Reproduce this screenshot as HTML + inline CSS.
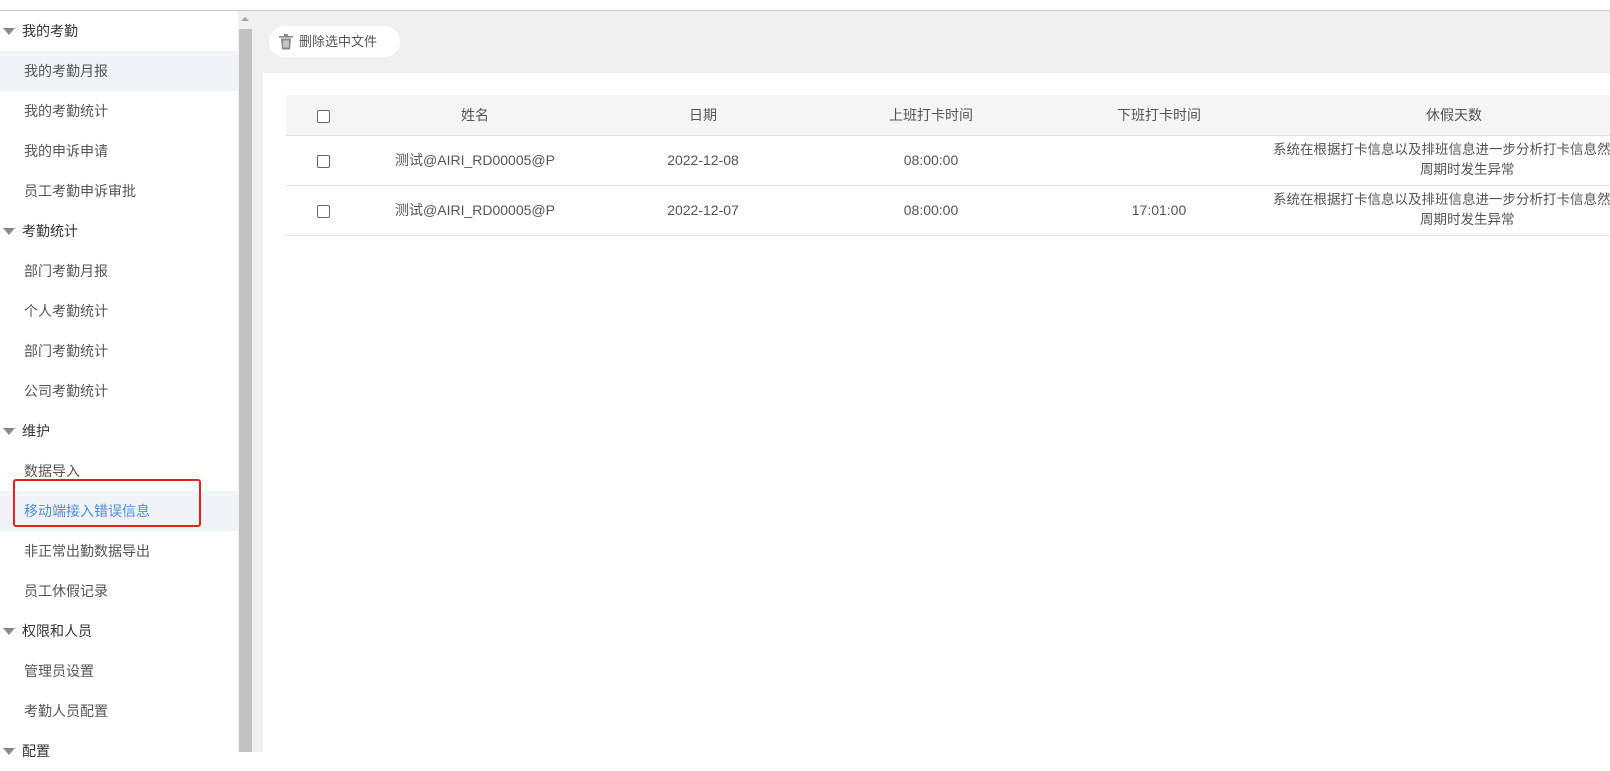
<!DOCTYPE html>
<html><head><meta charset="utf-8"><style>
*{margin:0;padding:0;box-sizing:border-box}
body{width:1610px;height:752px;overflow:hidden;background:#fff;font-family:"Liberation Sans","Noto Sans CJK SC",sans-serif;font-size:14px;color:#555;position:relative}
.topline{position:absolute;left:0;top:10px;width:1610px;height:1px;background:#c8c8c8}
.side{position:absolute;left:0;top:11px;width:238px;height:741px;background:#fff}
.row{position:absolute;left:0;width:238px;height:40px;line-height:40px}
.grp{padding-left:22px;color:#333}
.grp:before{content:"";position:absolute;left:3px;top:17px;border-left:6px solid transparent;border-right:6px solid transparent;border-top:7px solid #888}
.it{padding-left:24px;color:#555}
.hl{background:#f0f3f7}
.blue{color:#4a8fdf}
.sb{position:absolute;left:238px;top:11px;width:15px;height:741px;background:#f1f1f1}
.thumb{position:absolute;left:1px;top:18px;width:13px;height:723px;background:#c1c1c1}
.arr{position:absolute;left:3px;top:6px;border-left:4px solid transparent;border-right:4px solid transparent;border-bottom:4px solid #a3a3a3}
.main{position:absolute;left:253px;top:11px;width:1357px;height:741px;background:#f0f0f0}
.panel{position:absolute;left:263px;top:73px;width:1347px;height:679px;background:#fff}
.btn{position:absolute;left:269px;top:26px;width:131px;height:31px;background:#fff;border-radius:16px;color:#555;font-size:13px;line-height:31px;padding-left:30px}
.btn svg{position:absolute;left:10px;top:8px}
.redbox{position:absolute;left:13px;top:479px;width:188px;height:48px;border:2px solid #e8221b;border-radius:3px}
table{position:absolute;left:286px;top:95px;border-collapse:collapse;table-layout:fixed;width:1349px}
th{background:#f5f5f5;height:40px;font-weight:normal;color:#555;border-bottom:1px solid #e2e2e2;text-align:center}
td{height:50px;border-bottom:1px solid #e2e2e2;text-align:center;color:#555;line-height:20px}
.cb{display:inline-block;width:13px;height:13px;border:1px solid #666;border-radius:2px;vertical-align:middle;background:#fff}
.desc{white-space:nowrap;font-size:13.5px}
</style></head><body>
<div class="topline"></div>
<div class="side">
<div class="row grp" style="top:0">我的考勤</div>
<div class="row it hl" style="top:40px">我的考勤月报</div>
<div class="row it" style="top:80px">我的考勤统计</div>
<div class="row it" style="top:120px">我的申诉申请</div>
<div class="row it" style="top:160px">员工考勤申诉审批</div>
<div class="row grp" style="top:200px">考勤统计</div>
<div class="row it" style="top:240px">部门考勤月报</div>
<div class="row it" style="top:280px">个人考勤统计</div>
<div class="row it" style="top:320px">部门考勤统计</div>
<div class="row it" style="top:360px">公司考勤统计</div>
<div class="row grp" style="top:400px">维护</div>
<div class="row it" style="top:440px">数据导入</div>
<div class="row it hl blue" style="top:480px">移动端接入错误信息</div>
<div class="row it" style="top:520px">非正常出勤数据导出</div>
<div class="row it" style="top:560px">员工休假记录</div>
<div class="row grp" style="top:600px">权限和人员</div>
<div class="row it" style="top:640px">管理员设置</div>
<div class="row it" style="top:680px">考勤人员配置</div>
<div class="row grp" style="top:720px">配置</div>
</div>
<div class="redbox"></div>
<div class="sb"><div class="arr"></div><div class="thumb"></div></div>
<div class="main"></div>
<div class="btn"><svg width="14" height="16" viewBox="0 0 14 16"><rect x="0" y="2" width="14" height="1.6" fill="#888"/><rect x="5" y="0" width="4" height="2" fill="#888"/><path d="M2 4.5h10l-1 11H3z" fill="#888"/><path d="M5 6.5v7M7 6.5v7M9 6.5v7" stroke="#fff" stroke-width="1"/></svg>删除选中文件</div>
<div class="panel"></div>
<table>
<colgroup><col style="width:75px"><col style="width:228px"><col style="width:228px"><col style="width:228px"><col style="width:228px"><col style="width:362px"></colgroup>
<tr><th><span class="cb"></span></th><th>姓名</th><th>日期</th><th>上班打卡时间</th><th>下班打卡时间</th><th>休假天数</th></tr>
<tr><td><span class="cb"></span></td><td>测试@AIRI_RD00005@P</td><td>2022-12-08</td><td>08:00:00</td><td></td><td class="desc"><div style="text-align:left;padding-left:0">系统在根据打卡信息以及排班信息进一步分析打卡信息然后</div><div style="text-align:left;padding-left:147px">周期时发生异常</div></td></tr>
<tr><td><span class="cb"></span></td><td>测试@AIRI_RD00005@P</td><td>2022-12-07</td><td>08:00:00</td><td>17:01:00</td><td class="desc"><div style="text-align:left">系统在根据打卡信息以及排班信息进一步分析打卡信息然后</div><div style="text-align:left;padding-left:147px">周期时发生异常</div></td></tr>
</table>
</body></html>
